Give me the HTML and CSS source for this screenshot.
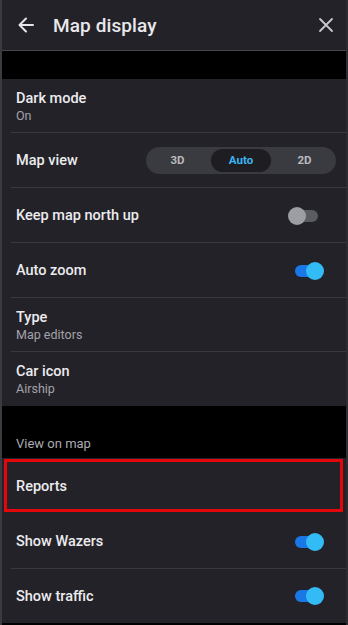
FILE: index.html
```html
<!DOCTYPE html>
<html>
<head>
<meta charset="utf-8">
<link rel="stylesheet" href="styles.css">
</head>
<body>
<div class="screen">
  <header class="header">
    <svg class="icon back" width="18" height="18" viewBox="0 0 18 18"><path d="M16 9H3M9 2.5L2.5 9 9 15.5" fill="none" stroke="#e6e6ea" stroke-width="2" stroke-linecap="round" stroke-linejoin="round"/></svg>
    <h1 class="title">Map display</h1>
    <svg class="icon close" width="16" height="16" viewBox="0 0 16 16"><path d="M2 2L14 14M14 2L2 14" fill="none" stroke="#c9c9cd" stroke-width="1.8" stroke-linecap="round"/></svg>
  </header>
  <div class="gap"></div>
  <section class="group">
    <div class="row two">
      <div class="label">Dark mode</div>
      <div class="sub">On</div>
    </div>
    <div class="row">
      <div class="label">Map view</div>
      <div class="seg">
        <span class="seg-item">3D</span>
        <span class="seg-item active">Auto</span>
        <span class="seg-item">2D</span>
      </div>
    </div>
    <div class="row">
      <div class="label">Keep map north up</div>
      <span class="toggle off"><span class="thumb"></span></span>
    </div>
    <div class="row">
      <div class="label">Auto zoom</div>
      <span class="toggle on"><span class="thumb"></span></span>
    </div>
    <div class="row two">
      <div class="label">Type</div>
      <div class="sub">Map editors</div>
    </div>
    <div class="row two last">
      <div class="label">Car icon</div>
      <div class="sub">Airship</div>
    </div>
  </section>
  <div class="section-title">View on map</div>
  <section class="group">
    <div class="row reports last">
      <div class="label">Reports</div>
    </div>
    <div class="row">
      <div class="label">Show Wazers</div>
      <span class="toggle on"><span class="thumb"></span></span>
    </div>
    <div class="row two-h last">
      <div class="label">Show traffic</div>
      <span class="toggle on"><span class="thumb"></span></span>
    </div>
  </section>
</div>
</body>
</html>
```
FILE: styles.css
```css
* { box-sizing: border-box; }
html, body { margin: 0; padding: 0; background: #000; }
body { font-family: Roboto, "Noto Sans", sans-serif; color: #ececef; }
.screen {
  width: 348px;
  height: 625px;
  background: #000;
  border-left: 2px solid #3a3a40;
  border-right: 2px solid #2c2c31;
  display: flex;
  flex-direction: column;
  overflow: hidden;
}
.header {
  height: 51px;
  background: #232228;
  border-bottom: 1px solid #46464c;
  display: flex;
  align-items: center;
  padding: 0 12px 0 15px;
  flex-shrink: 0;
}
.back { margin-right: 18px; }
.title {
  margin: 0;
  font-size: 19px;
  font-weight: 500;
  color: #e9e9ec;
  flex: 1;
  letter-spacing: 0.1px;
}
.gap { height: 28px; flex-shrink: 0; }
.group { background: #232228; flex-shrink: 0; }
.row {
  height: 55px;
  display: flex;
  align-items: center;
  justify-content: space-between;
  padding: 0 14px 0 14px;
  position: relative;
}
.row::after {
  content: "";
  position: absolute;
  left: 9px;
  right: 0;
  bottom: 0;
  height: 1px;
  background: #38383e;
}
.row.last::after { display: none; }
.row.two {
  height: 54px;
  flex-direction: column;
  align-items: flex-start;
  justify-content: center;
  gap: 1px;
  padding-top: 1px;
}
.row.two-h { height: 54px; }
.label {
  font-size: 14.5px;
  font-weight: 500;
  color: #ececef;
}
.sub {
  font-size: 12.5px;
  color: #a3a3a8;
}
.seg {
  width: 190px;
  height: 27px;
  border-radius: 14px;
  background: #3a3b40;
  display: flex;
  align-items: center;
  padding: 0 2px;
  margin-right: -4px;
}
.seg-item {
  flex: 1;
  text-align: center;
  font-size: 11.5px;
  font-weight: 700;
  color: #b9b9be;
  height: 23px;
  line-height: 23px;
  border-radius: 12px;
}
.seg-item.active {
  flex: 0 0 60px;
  margin: 0 4px;
  background: #1e1e22;
  color: #3ab6f3;
}
.toggle {
  position: relative;
  width: 37px;
  height: 18px;
  display: inline-block;
  margin-right: 7px;
}
.toggle::before {
  content: "";
  position: absolute;
  top: 3px;
  height: 12px;
  border-radius: 6px;
}
.toggle .thumb {
  position: absolute;
  top: 0;
  width: 18px;
  height: 18px;
  border-radius: 50%;
}
.toggle.on::before { background: #1a78e6; left: 7px; width: 24px; }
.toggle.on .thumb { left: 18px; background: #33bbf6; }
.toggle.off::before { background: #5b5c62; left: 8px; width: 22px; }
.toggle.off .thumb { left: 0; background: #9d9ea4; }
.section-title {
  height: 52px;
  display: flex;
  align-items: flex-end;
  padding: 0 0 7px 14px;
  font-size: 13px;
  color: #ababb0;
  flex-shrink: 0;
}
.row.reports { height: 56px; }
.row.reports::before {
  content: "";
  position: absolute;
  left: 2px;
  right: 3px;
  top: 1px;
  bottom: 2px;
  border: 3px solid #e3060a;
}
```
